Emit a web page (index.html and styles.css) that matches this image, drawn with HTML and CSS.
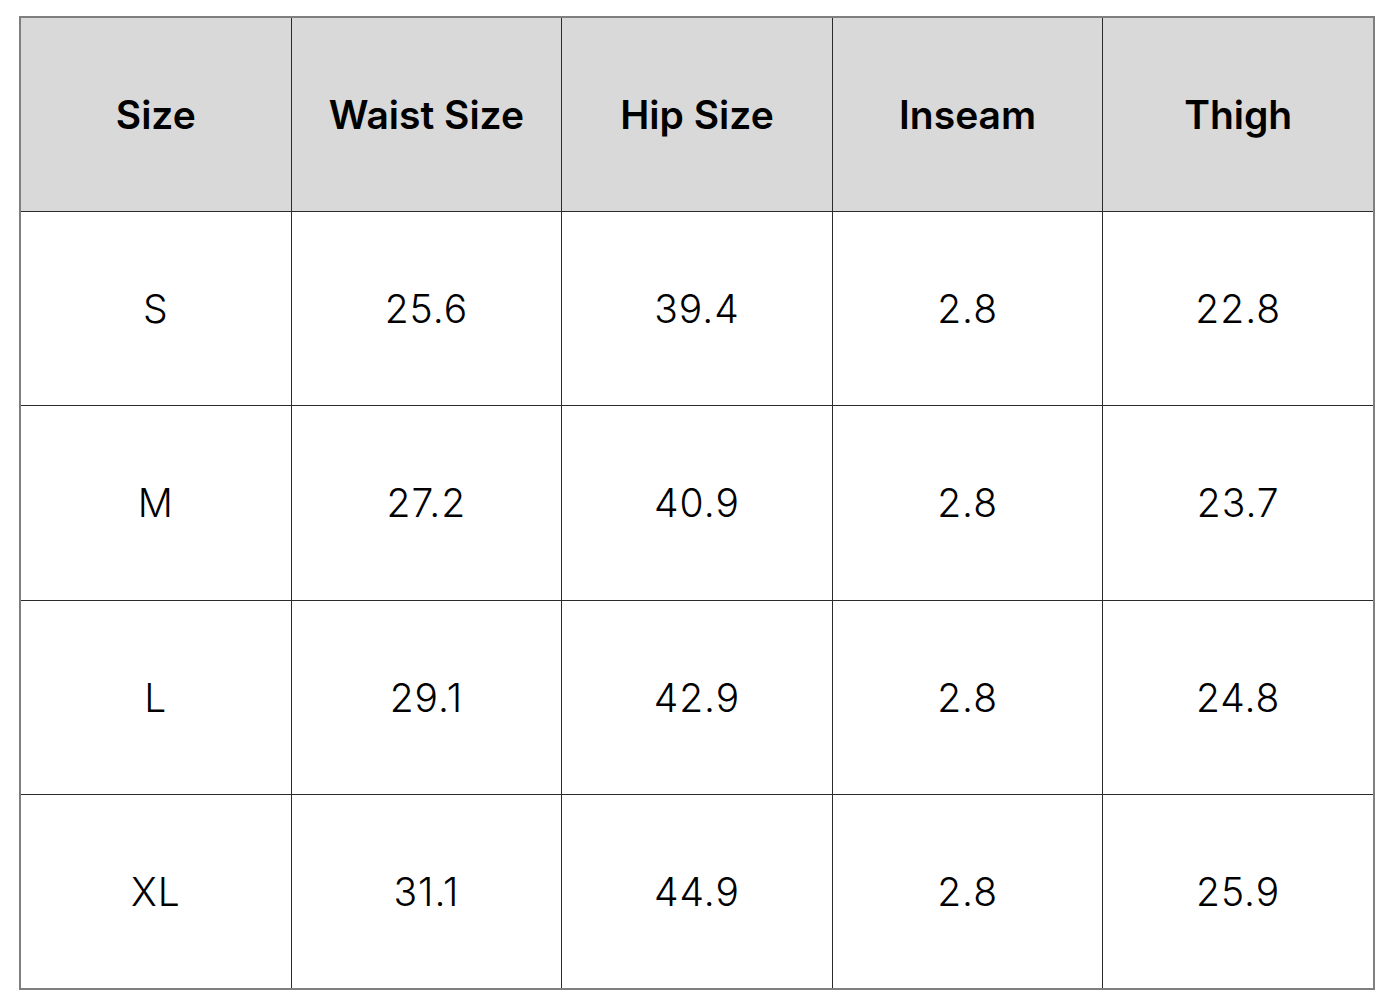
FILE: index.html
```html
<!DOCTYPE html>
<html>
<head>
<meta charset="utf-8">
<link rel="stylesheet" href="styles.css">
</head>
<body>
<div class="chart">
  <div class="cell head">Size</div>
  <div class="cell head">Waist Size</div>
  <div class="cell head">Hip Size</div>
  <div class="cell head">Inseam</div>
  <div class="cell head">Thigh</div>

  <div class="cell">S</div>
  <div class="cell">25.6</div>
  <div class="cell">39.4</div>
  <div class="cell">2.8</div>
  <div class="cell">22.8</div>

  <div class="cell">M</div>
  <div class="cell">27.2</div>
  <div class="cell">40.9</div>
  <div class="cell">2.8</div>
  <div class="cell">23.7</div>

  <div class="cell">L</div>
  <div class="cell">29.1</div>
  <div class="cell">42.9</div>
  <div class="cell">2.8</div>
  <div class="cell">24.8</div>

  <div class="cell">XL</div>
  <div class="cell">31.1</div>
  <div class="cell">44.9</div>
  <div class="cell">2.8</div>
  <div class="cell">25.9</div>
</div>
</body>
</html>
```
FILE: styles.css
```css
html, body {
  margin: 0;
  padding: 0;
  background: #ffffff;
}
body {
  padding: 16px 0 0 19px;
  font-family: Inter, "Liberation Sans", sans-serif;
}
.chart {
  box-sizing: border-box;
  width: 1356px;
  height: 974px;
  border: 2px solid #7f7f7f;
  background: #2b2b2b;
  display: grid;
  grid-template-columns: repeat(5, 1fr);
  grid-template-rows: repeat(5, 1fr);
  gap: 1px;
}
.cell {
  background: #ffffff;
  display: flex;
  align-items: center;
  justify-content: center;
  font-size: 39px;
  color: #000000;
  font-weight: 300;
  letter-spacing: 1px;
}
.head {
  background: #d9d9d9;
  font-weight: 600;
  letter-spacing: 0;
}
```
